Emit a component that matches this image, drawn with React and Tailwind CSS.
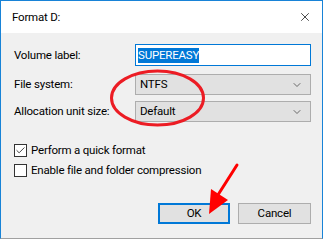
import { X, ChevronDown, Check } from 'lucide-react';

function Select({ value }) {
  return (
    <div className="flex h-[21px] w-[176px] items-center justify-between border border-[#adadad] bg-[#e1e1e1] pl-[4px] pr-[7px]">
      <span>{value}</span>
      <ChevronDown className="h-[12px] w-[12px] text-[#404040]" strokeWidth={1.5} />
    </div>
  );
}

function CheckRow({ checked, label }) {
  return (
    <div className="flex h-[13px] items-center gap-[4px]">
      <div className="flex h-[13px] w-[13px] items-center justify-center border border-[#333] bg-white">
        {checked && <Check className="h-[11px] w-[11px] text-[#333]" strokeWidth={2} />}
      </div>
      <span>{label}</span>
    </div>
  );
}

export default function App() {
  return (
    <div className="relative h-[241px] w-[324px] bg-white font-['Roboto',sans-serif] text-[11.5px] leading-[15px] tracking-[-0.2px] text-black">
      <div className="flex h-[239px] w-[323px] flex-col border border-[#1883d7] border-b-[#a0a0a0]">
        {/* title bar */}
        <div className="flex h-[32px] items-center justify-between bg-white pl-[11px] pr-[10px]">
          <span>Format D:</span>
          <X className="h-[14px] w-[14px] text-black" strokeWidth={1.2} />
        </div>

        {/* body */}
        <div className="flex flex-1 flex-col bg-[#f0f0f0] pl-[13px] pr-[11px] pt-[11px]">
          <div className="flex h-[22px] items-center">
            <span className="w-[121px]">Volume label:</span>
            <div className="flex h-[22px] w-[176px] items-center border border-[#0078d7] bg-white pl-[2px]">
              <span className="bg-[#0078d7] text-white">SUPEREASY</span>
            </div>
          </div>
          <div className="mt-[8px] flex h-[21px] items-center">
            <span className="w-[121px]">File system:</span>
            <Select value="NTFS" />
          </div>
          <div className="mt-[6px] flex h-[21px] items-center">
            <span className="w-[121px]">Allocation unit size:</span>
            <Select value="Default" />
          </div>

          <div className="mt-[22px] flex flex-col gap-[7px]">
            <CheckRow checked label="Perform a quick format" />
            <CheckRow label="Enable file and folder compression" />
          </div>

          <div className="mt-[26px] flex justify-end gap-[8px]">
            <button className="h-[21px] w-[72px] border-2 border-[#0078d7] bg-[#e1e1e1] leading-[15px]">OK</button>
            <button className="h-[21px] w-[73px] border border-[#adadad] bg-[#e1e1e1] leading-[15px]">Cancel</button>
          </div>
        </div>
      </div>

      {/* red annotations */}
      <svg className="pointer-events-none absolute left-0 top-0" width="324" height="241">
        <ellipse cx="157.5" cy="98" rx="46" ry="27" fill="none" stroke="#ec1c24" strokeWidth="3" />
        <line x1="237" y1="165" x2="216" y2="198" stroke="#f00" strokeWidth="3" strokeLinecap="round" />
        <polygon points="209,214 211,189 228,200" fill="#f00" />
      </svg>
    </div>
  );
}
